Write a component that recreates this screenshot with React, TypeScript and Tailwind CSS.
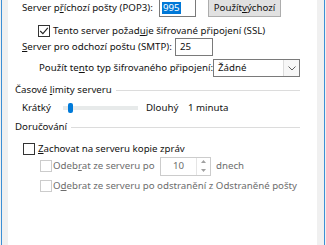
import React from 'react';

const Check = ({ checked = false, disabled = false }: { checked?: boolean; disabled?: boolean }) => (
  <div
    className={`w-[12px] h-[12px] border flex items-center justify-center shrink-0 ${
      disabled ? 'border-[#cccccc] bg-white' : 'border-[#333333] bg-white'
    }`}
  >
    {checked && (
      <svg width="10" height="10" viewBox="0 0 10 10">
        <path d="M1.2 5 L3.9 7.7 L8.8 1.8" fill="none" stroke="#222" strokeWidth="1.1" />
      </svg>
    )}
  </div>
);

const SectionHead = ({ children }: { children: React.ReactNode }) => (
  <div className="flex items-center h-[14px] ml-[7px] mr-[17px]">
    <span className="whitespace-nowrap">{children}</span>
    <div className="flex-1 h-px bg-[#dcdcdc] ml-[4px]" />
  </div>
);

export default function App() {
  return (
    <div
      className="w-[326px] h-[245px] overflow-hidden bg-[#f0f0f0] flex text-[9.7px] leading-[12px] text-[#111]"
      style={{ fontFamily: '"Noto Sans", "Open Sans", sans-serif' }}
    >
      <div className="w-px" />
      <div className="w-px bg-[#3c8fd5]" />
      <div className="w-[6px]" />
      <div className="flex-1 bg-white flex flex-col">
        {/* POP3 */}
        <div className="flex items-center h-[18px] mt-[-1px]">
          <span className="ml-[14px] w-[137px] whitespace-nowrap">
            Server p<u>ř</u>íchozí pošty (POP3):
          </span>
          <div className="w-[37px] h-[18px] border border-[#7a7a7a] flex items-center pl-[2px]">
            <span className="bg-[#0078d7] text-white px-[1px]">995</span>
          </div>
          <div className="ml-[12px] w-[73px] h-[18px] border border-[#adadad] bg-[#e1e1e1] flex items-center justify-center whitespace-nowrap">
            Použít <u>v</u>ýchozí
          </div>
        </div>

        <div className="flex items-center h-[13px] mt-[7px] ml-[30px]">
          <Check checked />
          <span className="ml-[3px] whitespace-nowrap">
            Tento server požad<u>u</u>je šifrované připojení (SSL)
          </span>
        </div>

        {/* SMTP */}
        <div className="flex items-center h-[18px] mt-[1px]">
          <span className="ml-[14px] w-[153px] whitespace-nowrap">
            <u>S</u>erver pro odchozí poštu (SMTP):
          </span>
          <div className="w-[38px] h-[18px] border border-[#7a7a7a] flex items-center pl-[4px]">
            25
          </div>
        </div>

        <div className="flex items-center h-[18px] mt-[3px]">
          <span className="ml-[31px] w-[174px] whitespace-nowrap">
            Použít te<u>n</u>to typ šifrovaného připojení:
          </span>
          <div className="w-[87px] h-[18px] border border-[#7a7a7a] flex items-center">
            <span className="flex-1 pl-[4px]">Žádné</span>
            <div className="w-[16px] h-full border-l border-[#dcdcdc] bg-[#f7f7f7] flex items-center justify-center">
              <svg width="8" height="5" viewBox="0 0 8 5">
                <path d="M0.5 0.5 L4 4 L7.5 0.5" fill="none" stroke="#606060" strokeWidth="1" />
              </svg>
            </div>
          </div>
        </div>

        <div className="mt-[6px]">
          <SectionHead>
            Časové <u>l</u>imity serveru
          </SectionHead>
        </div>

        <div className="flex items-center h-[14px] mt-[4px]">
          <span className="ml-[14px] w-[41px]">Krátký</span>
          <div className="w-[75px] h-[4px] bg-[#e7eaea] relative">
            <div className="absolute left-[5px] top-[-3px] w-[5px] h-[10px] rounded-[2px] bg-[#007ad9]" />
          </div>
          <span className="ml-[8px] w-[42px]">Dlouhý</span>
          <span>1 minuta</span>
        </div>

        <div className="mt-[5px]">
          <SectionHead>Doručování</SectionHead>
        </div>

        <div className="flex items-center h-[13px] mt-[8px] ml-[15px]">
          <Check />
          <span className="ml-[3px] whitespace-nowrap">
            <u>Z</u>achovat na serveru kopie zpráv
          </span>
        </div>

        <div className="flex items-center h-[20px] mt-[1px] ml-[32px] text-[#6d6d6d]">
          <Check disabled />
          <span className="ml-[1px] w-[107px] whitespace-nowrap">
            Odeb<u>r</u>at ze serveru po
          </span>
          <div className="w-[51px] h-[19px] border border-[#cccccc] flex items-center">
            <span className="flex-1 pl-[12px]">10</span>
            <div className="w-[14px] h-full flex flex-col border-l border-[#e5e5e5]">
              <div className="flex-1 flex items-center justify-center">
                <svg width="5" height="3" viewBox="0 0 5 3"><path d="M0 3 L2.5 0 L5 3 Z" fill="#a0a0a0" /></svg>
              </div>
              <div className="flex-1 flex items-center justify-center">
                <svg width="5" height="3" viewBox="0 0 5 3"><path d="M0 0 L2.5 3 L5 0 Z" fill="#a0a0a0" /></svg>
              </div>
            </div>
          </div>
          <span className="ml-[5px]">dnech</span>
        </div>

        <div className="flex items-center h-[12px] mt-[4px] ml-[32px] text-[#6d6d6d]">
          <Check disabled />
          <span className="ml-[1px] whitespace-nowrap">
            O<u>d</u>ebrat ze serveru po odstranění z Odstraněné pošty
          </span>
        </div>
      </div>
      <div className="w-[7px]" />
      <div className="w-px bg-[#3c8fd5]" />
      <div className="w-px" />
    </div>
  );
}
